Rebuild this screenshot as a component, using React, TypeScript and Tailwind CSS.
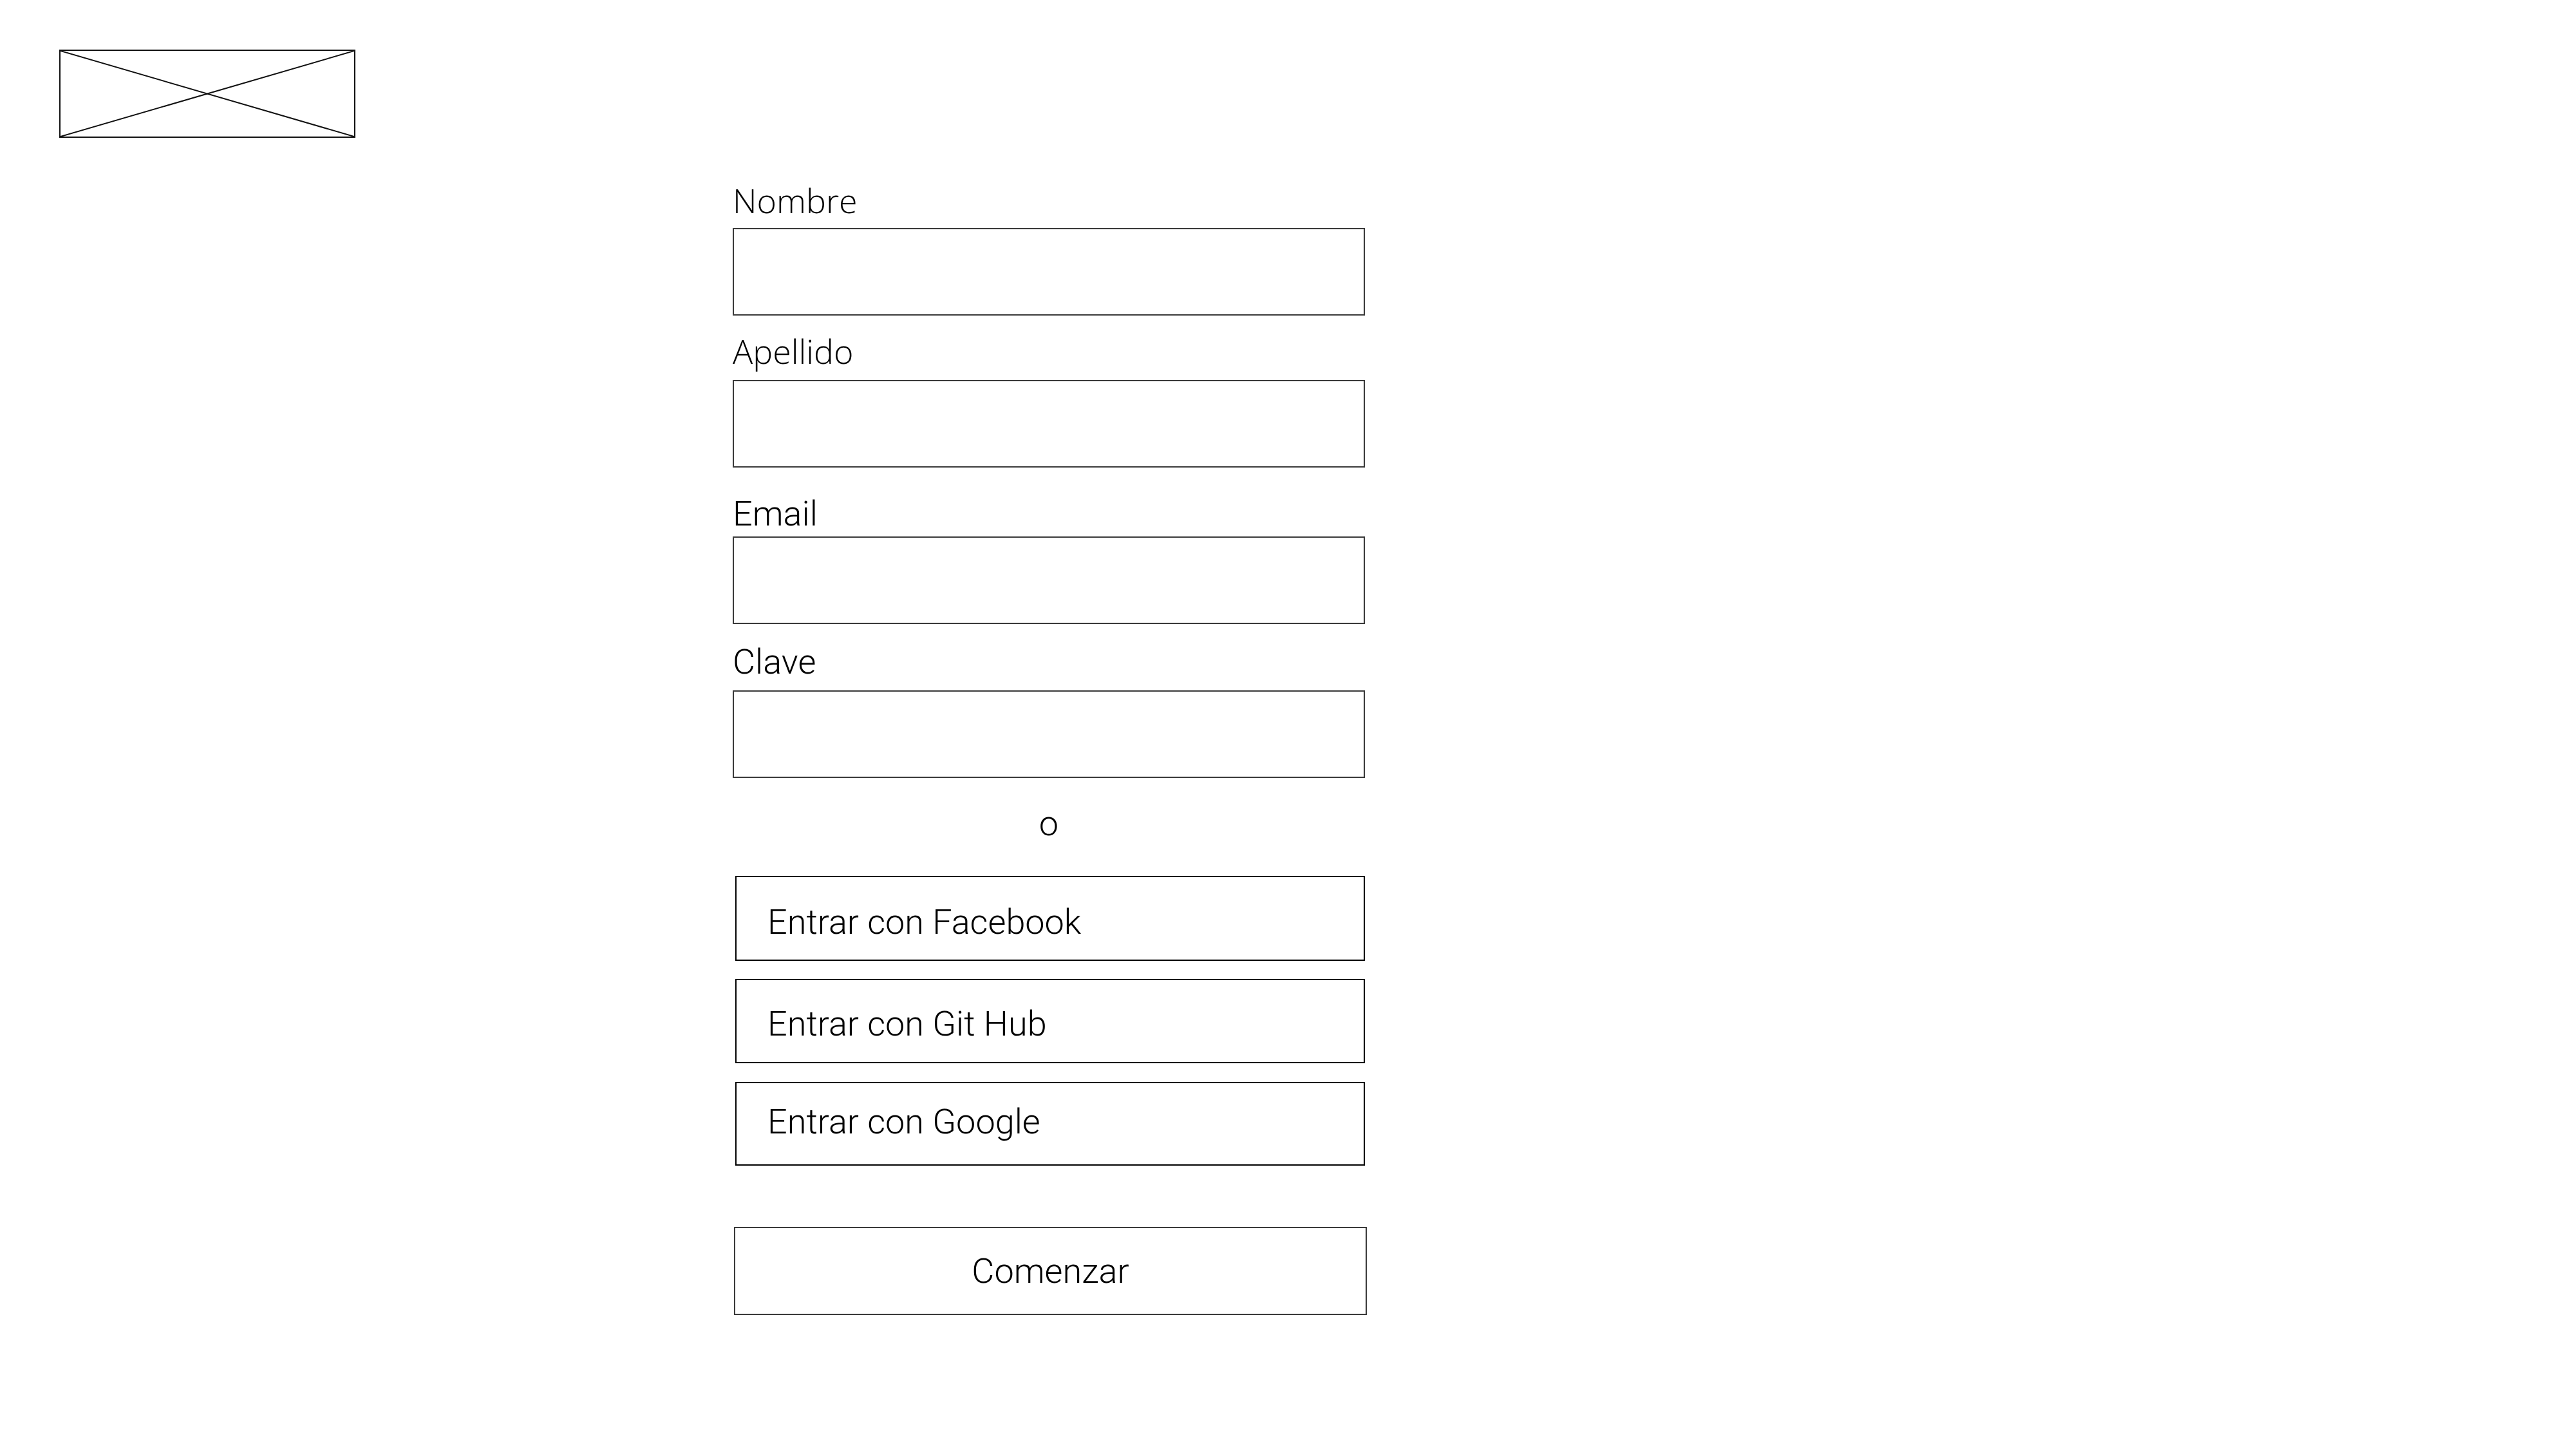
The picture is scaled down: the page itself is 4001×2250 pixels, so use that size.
import React from "react";

const roboto = "font-['Roboto',_'Liberation_Sans',_sans-serif]";
const openSans = "font-['Open_Sans',_'Liberation_Sans',_sans-serif]";

function Field({ label, labelClass, inputMt }: { label: string; labelClass: string; inputMt: string }) {
  return (
    <>
      <label className={`${labelClass} block font-light text-black`}>{label}</label>
      <input
        type="text"
        className={`${inputMt} w-[982px] h-[136px] border-2 border-[#3a3a3a] bg-white outline-none px-6 text-[40px]`}
      />
    </>
  );
}

export default function App() {
  return (
    <div className="min-h-screen w-full bg-white flex flex-col">
      {/* logo placeholder */}
      <div className="ml-[92px] mt-[77px] w-[460px] h-[137px] border-2 border-[#111] relative">
        <svg className="absolute inset-0 w-full h-full" viewBox="0 0 100 100" preserveAspectRatio="none">
          <line x1="0" y1="0" x2="100" y2="100" stroke="#111" strokeWidth="2" vectorEffect="non-scaling-stroke" />
          <line x1="100" y1="0" x2="0" y2="100" stroke="#111" strokeWidth="2" vectorEffect="non-scaling-stroke" />
        </svg>
      </div>

      <form className="ml-[1138px] w-[985px] flex flex-col items-start pb-[100px]">
        <Field label="Nombre" labelClass={`${openSans} mt-[71px] text-[52px] leading-[52px]`} inputMt="mt-[17px]" />
        <Field label="Apellido" labelClass={`${openSans} mt-[29px] text-[52px] leading-[52px]`} inputMt="mt-[19px]" />
        <Field label="Email" labelClass={`${roboto} mt-[45px] text-[54px] leading-[54px]`} inputMt="mt-[8px]" />
        <Field label="Clave" labelClass={`${roboto} mt-[32px] text-[54px] leading-[54px]`} inputMt="mt-[17px]" />

        <p className={`${roboto} mt-[44px] w-[982px] text-center text-[54px] leading-[54px] font-light text-black`}>o</p>

        <button type="button" className={`${roboto} mt-[54px] ml-[4px] w-[978px] h-[132px] border-2 border-black text-left pl-[48px] pt-[43px] text-[54px] leading-[54px] font-light text-black flex items-start`}>
          Entrar con Facebook
        </button>
        <button type="button" className={`${roboto} mt-[28px] ml-[4px] w-[978px] h-[131px] border-2 border-black text-left pl-[48px] pt-[41px] text-[54px] leading-[54px] font-light text-black flex items-start`}>
          Entrar con Git Hub
        </button>
        <button type="button" className={`${roboto} mt-[29px] ml-[4px] w-[978px] h-[130px] border-2 border-black text-left pl-[48px] pt-[33px] text-[54px] leading-[54px] font-light text-black flex items-start`}>
          Entrar con Google
        </button>

        <button type="submit" className={`${roboto} mt-[95px] ml-[2px] w-[983px] h-[137px] border-2 border-[#3a3a3a] flex items-center justify-center text-[54px] leading-[54px] font-light text-black`}>
          Comenzar
        </button>
      </form>
    </div>
  );
}
